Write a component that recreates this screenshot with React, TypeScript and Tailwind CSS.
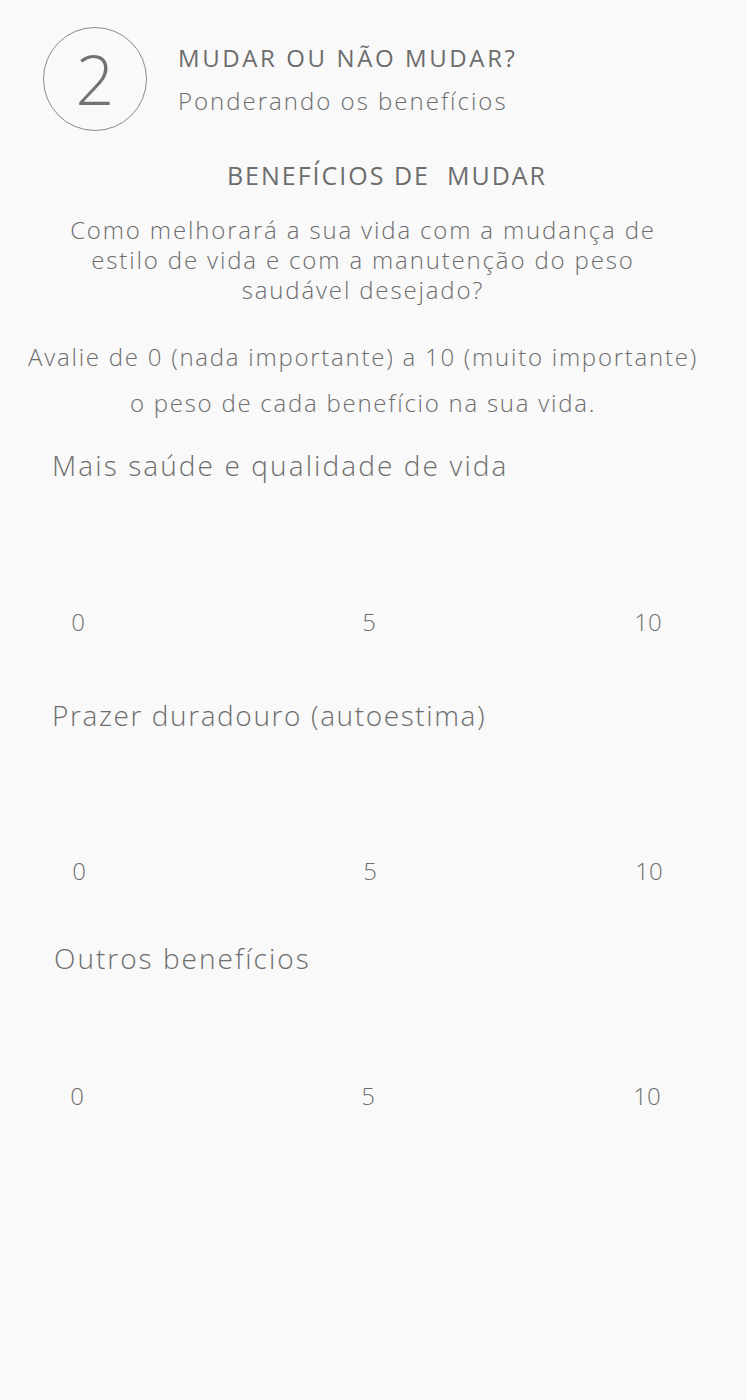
import React from "react";

const Scale = ({ mt, shift = 0 }: { mt: string; shift?: number }) => (
  <div
    className={`${mt} flex h-[30px] items-center text-[24px] leading-[30px] text-[#6f6f6f] font-light`}
    style={{ paddingLeft: 48 + shift }}
  >
    <span className="w-[60px] text-center">0</span>
    <span className="ml-[231px] w-[60px] text-center">5</span>
    <span className="ml-[219px] w-[60px] text-center">10</span>
  </div>
);

export default function App() {
  return (
    <div
      className="min-h-[1400px] w-full bg-[#f9f9f9] text-[#6d6d6d]"
      style={{ fontFamily: '"Open Sans", "Noto Sans", sans-serif' }}
    >
      <div className="flex pl-[43px] pt-[27px]">
        <div className="flex h-[104px] w-[104px] items-center justify-center rounded-full border border-[#8a8a8a]">
          <span className="text-[68px] font-light leading-none text-[#727272]">2</span>
        </div>
        <div className="ml-[31px] mt-[16px] flex flex-col">
          <div className="text-[24px] leading-[30px] tracking-[2.6px]">MUDAR OU NÃO MUDAR?</div>
          <div className="mt-[13px] text-[24px] font-light leading-[30px] tracking-[2px]">Ponderando os benefícios</div>
        </div>
      </div>

      <div className="mt-[29px] pl-[27px] text-center text-[25px] leading-[30px] tracking-[2px]">BENEFÍCIOS DE&nbsp; MUDAR</div>

      <div className="ml-[58px] mt-[25px] w-[610px] text-center text-[24px] font-light leading-[30px] tracking-[1.85px]">
        Como melhorará a sua vida com a mudança de estilo de vida e com a manutenção do peso saudável desejado?
      </div>

      <div className="mt-[29px] pr-[21px] text-center text-[24px] font-light leading-[46px] tracking-[1.75px]">
        <div>Avalie de 0 (nada importante) a 10 (muito importante)</div>
        <div>o peso de cada benefício na sua vida.</div>
      </div>

      <div className="mt-[21px] pl-[52px] text-[28px] font-light leading-[36px] tracking-[2.1px]">
        Mais saúde e qualidade de vida
      </div>
      <Scale mt="mt-[124px]" />

      <div className="mt-[60px] pl-[52px] text-[28px] font-light leading-[36px] tracking-[1.6px]">
        Prazer duradouro (autoestima)
      </div>
      <Scale mt="mt-[123px]" shift={1} />

      <div className="mt-[54px] pl-[54px] text-[28px] font-light leading-[36px] tracking-[2px]">
        Outros benefícios
      </div>
      <Scale mt="mt-[105px]" shift={-1} />
    </div>
  );
}
